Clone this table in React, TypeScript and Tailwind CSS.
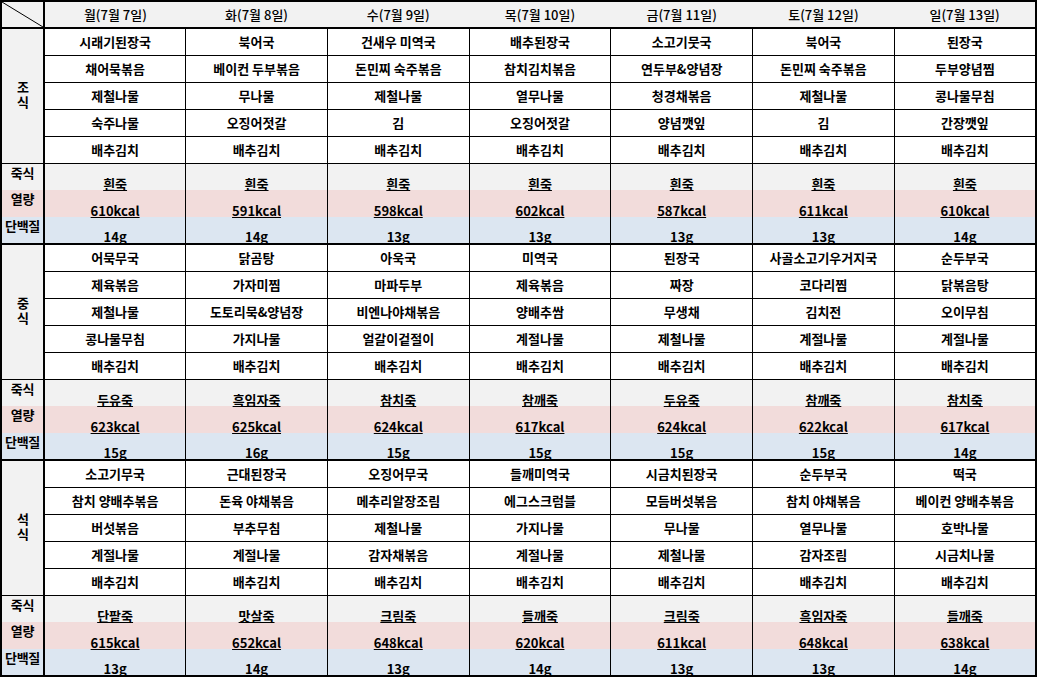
import { Fragment } from "react";
import clsx from "clsx";

const DAYS = ["월(7월 7일)", "화(7월 8일)", "수(7월 9일)", "목(7월 10일)", "금(7월 11일)", "토(7월 12일)", "일(7월 13일)"];

type Meal = {
  label: string;
  menu: string[][];
  juk: string[];
  kcal: string[];
  protein: string[];
};

const MEALS: Meal[] = [
  {
    label: "조식",
    menu: [
      ["시래기된장국", "채어묵볶음", "제철나물", "숙주나물", "배추김치"],
      ["북어국", "베이컨 두부볶음", "무나물", "오징어젓갈", "배추김치"],
      ["건새우 미역국", "돈민찌 숙주볶음", "제철나물", "김", "배추김치"],
      ["배추된장국", "참치김치볶음", "열무나물", "오징어젓갈", "배추김치"],
      ["소고기뭇국", "연두부&양념장", "청경채볶음", "양념깻잎", "배추김치"],
      ["북어국", "돈민찌 숙주볶음", "제철나물", "김", "배추김치"],
      ["된장국", "두부양념찜", "콩나물무침", "간장깻잎", "배추김치"],
    ],
    juk: ["흰죽", "흰죽", "흰죽", "흰죽", "흰죽", "흰죽", "흰죽"],
    kcal: ["610kcal", "591kcal", "598kcal", "602kcal", "587kcal", "611kcal", "610kcal"],
    protein: ["14g", "14g", "13g", "13g", "13g", "13g", "14g"],
  },
  {
    label: "중식",
    menu: [
      ["어묵무국", "제육볶음", "제철나물", "콩나물무침", "배추김치"],
      ["닭곰탕", "가자미찜", "도토리묵&양념장", "가지나물", "배추김치"],
      ["아욱국", "마파두부", "비엔나야채볶음", "얼갈이겉절이", "배추김치"],
      ["미역국", "제육볶음", "양배추쌈", "계절나물", "배추김치"],
      ["된장국", "짜장", "무생채", "제철나물", "배추김치"],
      ["사골소고기우거지국", "코다리찜", "김치전", "계절나물", "배추김치"],
      ["순두부국", "닭볶음탕", "오이무침", "계절나물", "배추김치"],
    ],
    juk: ["두유죽", "흑임자죽", "참치죽", "참깨죽", "두유죽", "참깨죽", "참치죽"],
    kcal: ["623kcal", "625kcal", "624kcal", "617kcal", "624kcal", "622kcal", "617kcal"],
    protein: ["15g", "16g", "15g", "15g", "15g", "15g", "14g"],
  },
  {
    label: "석식",
    menu: [
      ["소고기무국", "참치 양배추볶음", "버섯볶음", "계절나물", "배추김치"],
      ["근대된장국", "돈육 야채볶음", "부추무침", "계절나물", "배추김치"],
      ["오징어무국", "메추리알장조림", "제철나물", "감자채볶음", "배추김치"],
      ["들깨미역국", "에그스크럼블", "가지나물", "계절나물", "배추김치"],
      ["시금치된장국", "모듬버섯볶음", "무나물", "제철나물", "배추김치"],
      ["순두부국", "참치 야채볶음", "열무나물", "감자조림", "배추김치"],
      ["떡국", "베이컨 양배추볶음", "호박나물", "시금치나물", "배추김치"],
    ],
    juk: ["단팥죽", "맛살죽", "크림죽", "들깨죽", "크림죽", "흑임자죽", "들깨죽"],
    kcal: ["615kcal", "652kcal", "648kcal", "620kcal", "611kcal", "648kcal", "638kcal"],
    protein: ["13g", "14g", "13g", "14g", "13g", "13g", "14g"],
  },
];

const ROWS = [0, 1, 2, 3, 4];

function InfoRow({ label, values, bg, last }: { label: string; values: string[]; bg: string; last?: boolean }) {
  return (
    <tr className={clsx("h-[27px]", bg)}>
      <td
        className={clsx(
          "p-0 pt-[1px] align-top text-center leading-[16px] border-l-2 border-r-2 border-black tracking-tight",
          last && "border-b-2"
        )}
      >
        {label}
      </td>
      {values.map((v, i) => (
        <td
          key={i}
          className={clsx(
            "p-0 align-bottom text-center leading-[12px] underline underline-offset-[1px] border-l border-r border-black",
            i === 6 && "border-r-2",
            last && "border-b-2"
          )}
        >
          {v}
        </td>
      ))}
    </tr>
  );
}

export default function App() {
  return (
    <div className="w-[1037px] h-[679px] bg-white text-black text-[13px] font-bold font-['Noto_Sans_CJK_KR',sans-serif]">
      <table className="w-[1037px] table-fixed border-collapse">
        <colgroup>
          <col className="w-[43px]" />
          {DAYS.map((d) => (
            <col key={d} />
          ))}
        </colgroup>
        <thead>
          <tr className="h-[27px] bg-[#f2f2f2]">
            <th className="p-0 border-2 border-black">
              {/* diagonal corner */}
              <svg viewBox="0 0 41 25" preserveAspectRatio="none" className="block w-full h-[25px]">
                <line x1="0" y1="0" x2="41" y2="25" stroke="#000" strokeWidth="1" vectorEffect="non-scaling-stroke" />
              </svg>
            </th>
            {DAYS.map((d, i) => (
              <th
                key={d}
                className={clsx("p-0 font-medium text-center border-t-2 border-b-2 border-black", i === 6 && "border-r-2")}
              >
                {d}
              </th>
            ))}
          </tr>
        </thead>
        <tbody>
          {MEALS.map((meal, m) => (
            <Fragment key={m}>
              {ROWS.map((r) => (
                <tr key={r} className="h-[27px]">
                  {r === 0 && (
                    <td
                      rowSpan={5}
                      className="p-0 bg-[#f2f2f2] border-l-2 border-r-2 border-b border-black"
                    >
                      <div className="flex justify-center">
                        <span className="[writing-mode:vertical-lr] [text-orientation:upright] tracking-[2px] leading-[16px]">
                          {meal.label}
                        </span>
                      </div>
                    </td>
                  )}
                  {meal.menu.map((col, c) => (
                    <td
                      key={c}
                      className={clsx("p-0 text-center bg-white border border-black", c === 6 && "border-r-2")}
                    >
                      {col[r]}
                    </td>
                  ))}
                </tr>
              ))}
              <InfoRow label="죽식" values={meal.juk} bg="bg-[#f2f2f2]" />
              <InfoRow label="열량" values={meal.kcal} bg="bg-[#f2dcdb]" />
              <InfoRow label="단백질" values={meal.protein} bg="bg-[#dce6f1]" last />
            </Fragment>
          ))}
        </tbody>
      </table>
    </div>
  );
}
